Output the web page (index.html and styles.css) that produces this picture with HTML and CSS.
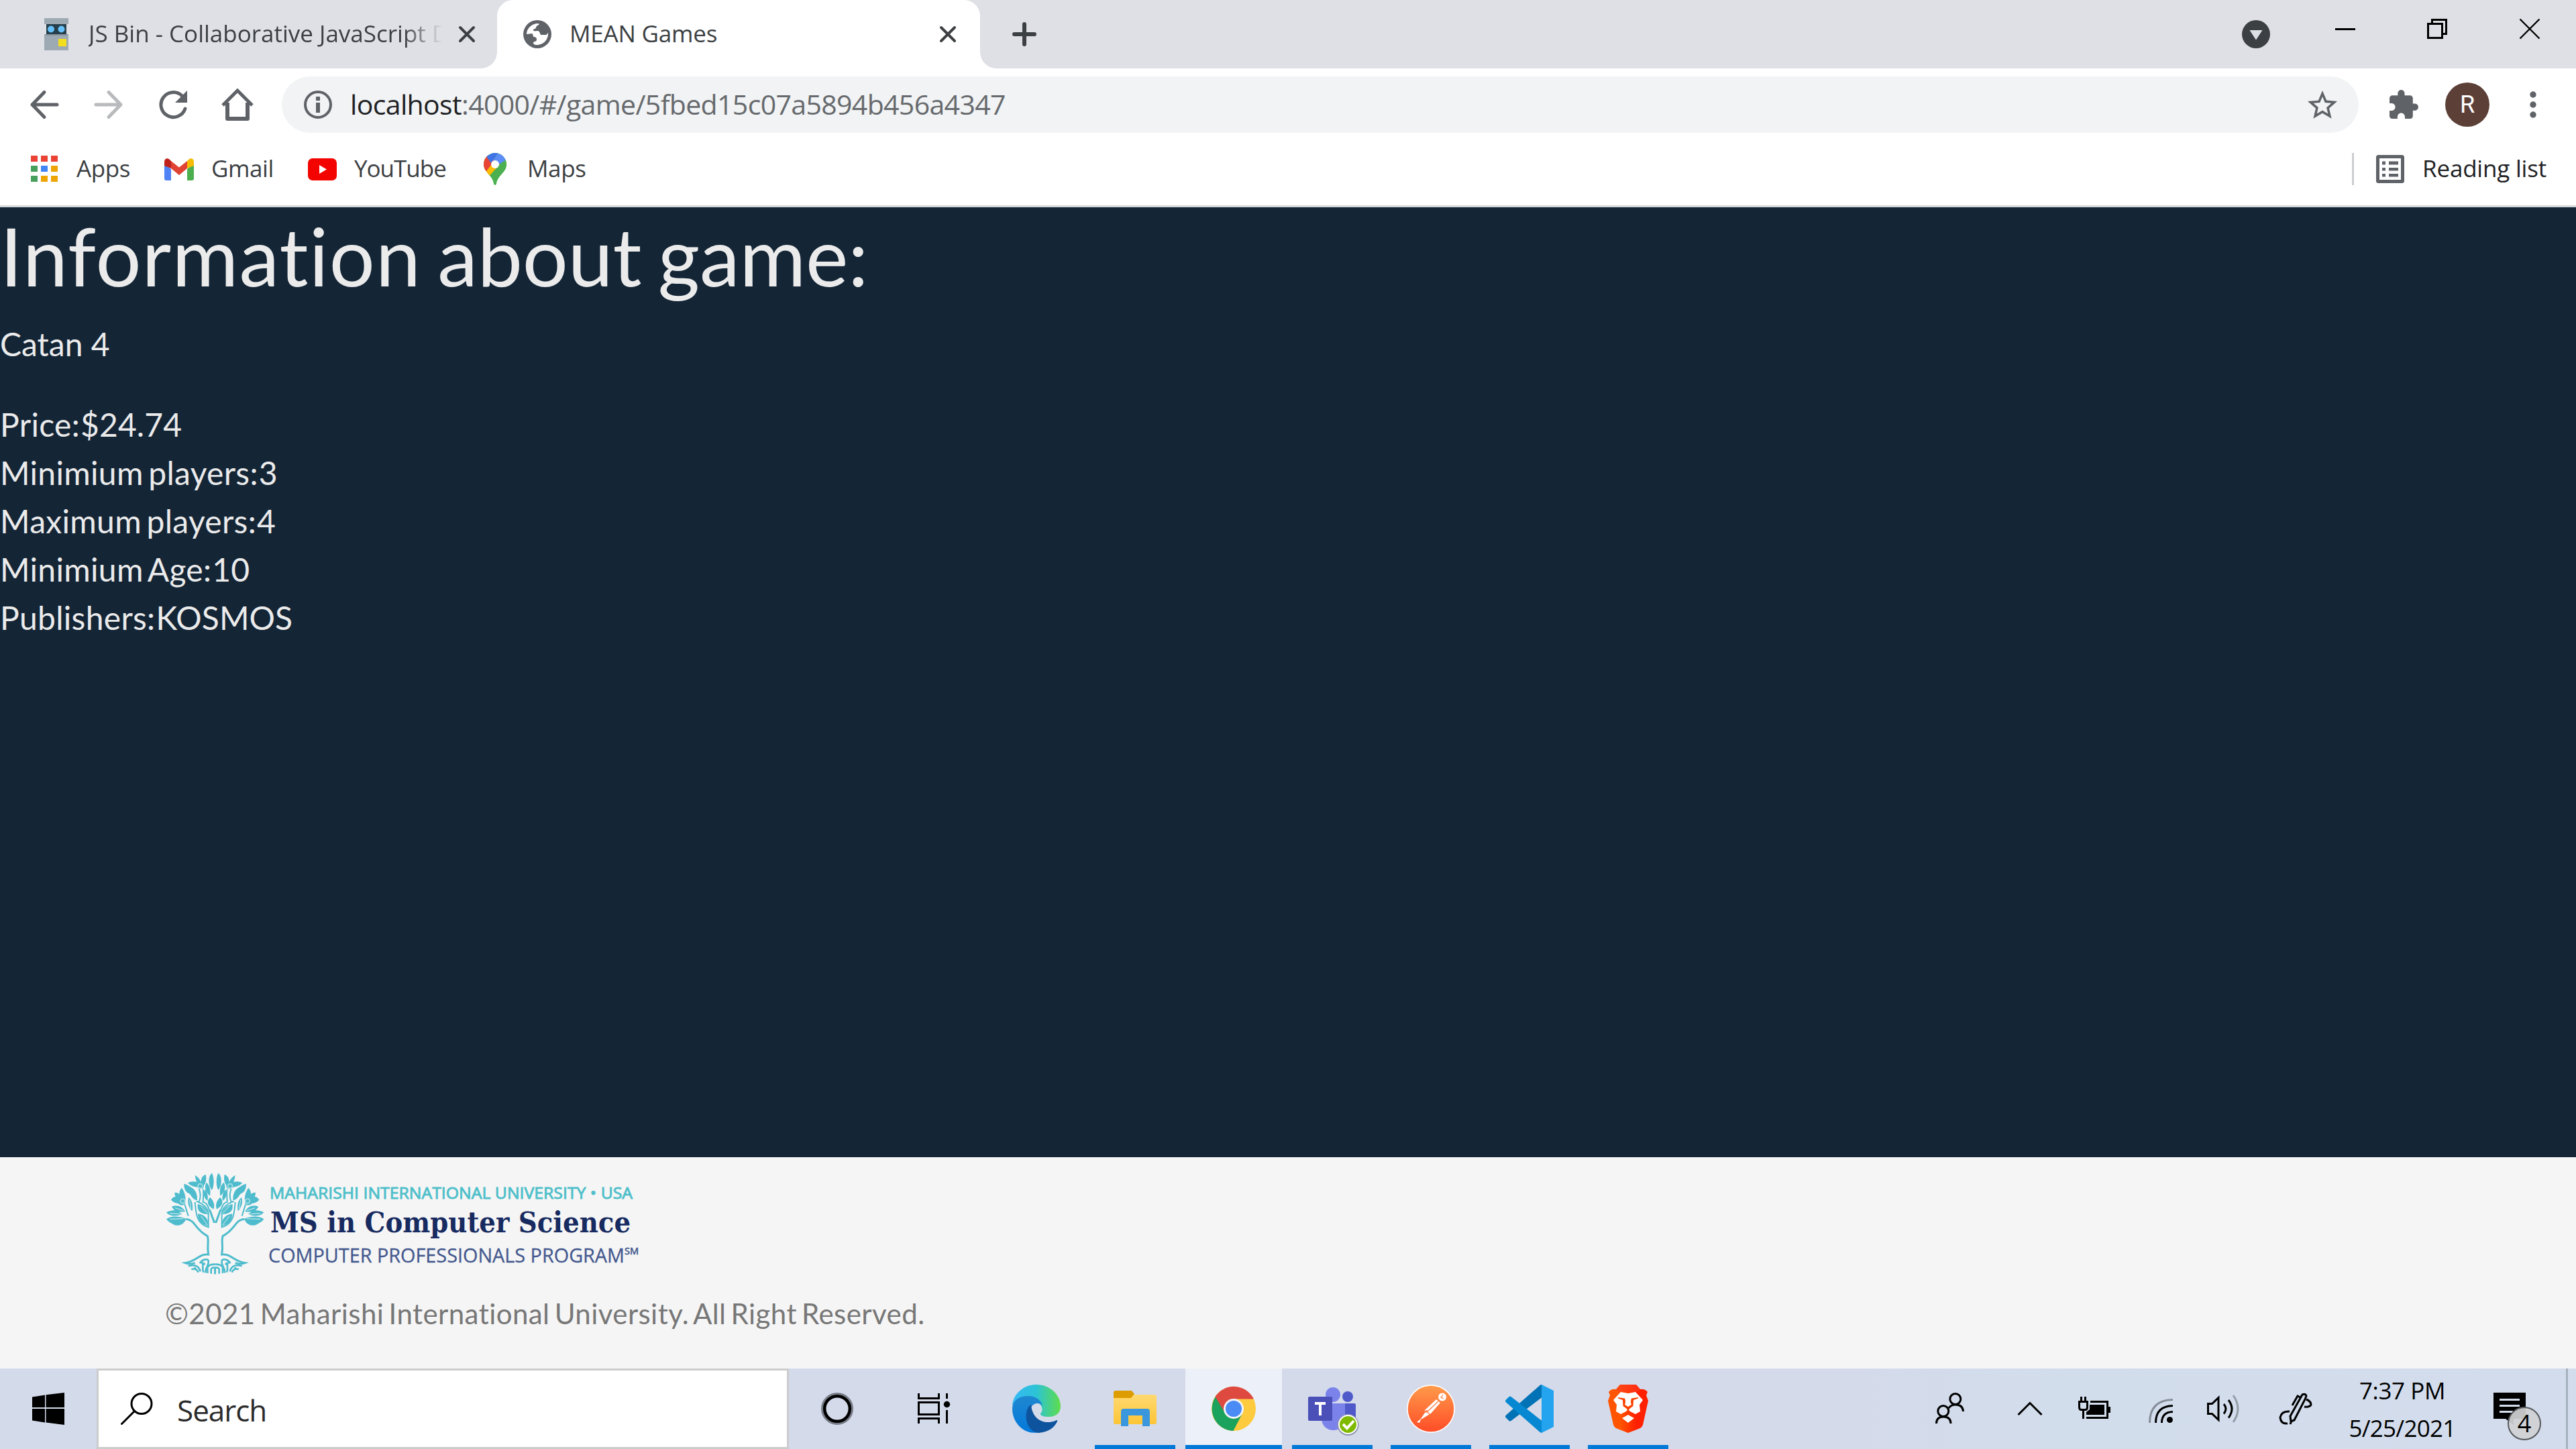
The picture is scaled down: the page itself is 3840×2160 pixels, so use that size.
FILE: index.html
```html
<!DOCTYPE html>
<html lang="en">
<head>
<meta charset="utf-8">
<title>MEAN Games</title>
<link rel="stylesheet" href="styles.css">
</head>
<body>
<div class="tabs">
  <div class="tab tab-idle">
    <svg class="ic" width="36" height="48" viewBox="66 27 36 48"><path fill="#9eaab3" d="M66 27h36v9h-36zM66 51h36v24h-36z"/><path fill="#263f4b" d="M69 36h30v16h-30z"/><path fill="#8997a0" d="M67 51h34v2h-34z"/><circle cx="76" cy="43.500" r="5" fill="#67c0f7"/><circle cx="91.500" cy="43.500" r="5" fill="#67c0f7"/><path fill="#f2de1d" d="M87 58h12v11h-12z"/></svg>
    <span class="t tab-title fade">JS Bin - Collaborative JavaScript D</span>
    <svg class="ic" width="26" height="26" viewBox="683 38 26 26"><path d="M686 41l20 20M706 41l-20 20" stroke="#3c4043" stroke-width="4" stroke-linecap="round"/></svg>
  </div>
  <div class="tab tab-active">
    <svg class="ic" width="42" height="42" viewBox="0 0 42 42"><circle cx="21" cy="21" r="21" fill="#5f6368"/><path fill="#fff" d="M5 21C5 12 13 5 22 5c2 0 2 1 1 2-2 1-4 2-4 4 0 3-4 1-4 4 0 2 3 1 6 1 5 0 3 6 6 6h7c2-1 3-3 3-4 1 10-6 19-17 19-3 0-5-1-5-3 0-3 5-1 5-5 0-2-1-4-4-4-2 0-1-5-3-5z"/></svg>
    <span class="t tab-title">MEAN Games</span>
    <svg class="ic" width="26" height="26" viewBox="683 38 26 26"><path d="M686 41l20 20M706 41l-20 20" stroke="#3c4043" stroke-width="4" stroke-linecap="round"/></svg>
  </div>
  <svg class="ic plus" width="36" height="36" viewBox="0 0 36 36"><path d="M18 3v30M3 18h30" stroke="#3c4043" stroke-width="6" stroke-linecap="round"/></svg>
  <div class="win">
    <svg class="ic drop" width="42" height="42" viewBox="0 0 42 42"><circle cx="21" cy="21" r="21" fill="#3c4043"/><path d="M11.500 15h19L21 29.500z" fill="#dfe0e5"/></svg>
    <svg class="ic" width="306" height="32" viewBox="3481 27 306 32"><g fill="none" stroke="#000" stroke-width="3"><path d="M3481 43.500h30M3619.500 35.500h21v21h-21zM3625.500 35v-5.500h21v21H3641"/><path stroke-width="2.400" d="M3756.500 28.500l29 29M3785.500 28.500l-29 29"/></g></svg>
  </div>
</div>
<div class="toolbar">
  <svg class="ic nav" width="336" height="50" viewBox="44 131 336 50"><g fill="none" stroke="#5f6368" stroke-width="5"><path stroke-linecap="round" stroke-linejoin="round" d="M66 137.500L48 156l18 18.500M48 156h37"/><path stroke="#b9babd" stroke-linecap="round" stroke-linejoin="round" d="M162 137.500L180 156l-18 18.500M180 156h-37"/><path stroke-linecap="round" d="M276 162a18.500 18.500 0 1 1-4.500-19"/><path fill="#5f6368" stroke="none" d="M279 135v18h-18z"/><path stroke-linejoin="round" stroke-width="6" d="M339 153v24h30v-24"/><path d="M332 157l22-22 22 22"/></g></svg>
  <div class="omni">
    <svg class="ic" width="42" height="42" viewBox="0 0 42 42"><circle cx="21" cy="21" r="19" fill="none" stroke="#5f6368" stroke-width="4"/><path fill="#5f6368" d="M18 9h6v6h-6zM18 18h6v15h-6z"/></svg>
    <span class="t url"><b>localhost</b>:4000/#/game/5fbed15c07a5894b456a4347</span>
    <svg class="ic star" width="44" height="43" viewBox="2 2 20 19.500"><path fill="#5f6368" d="M22 9.240l-7.190-.62L12 2 9.190 8.630 2 9.240l5.460 4.730L5.820 21 12 17.270 18.180 21l-1.630-7.030L22 9.240zM12 15.400l-3.760 2.270 1-4.280-3.320-2.880 4.380-.38L12 6.100l1.710 4.040 4.380.38-3.320 2.880 1 4.280L12 15.400z"/></svg>
  </div>
  <svg class="ic puz" width="44" height="44" viewBox="1.500 1 21.500 21.500"><path fill="#5f6368" d="M20.500 11H19V7c0-1.100-.9-2-2-2h-4V3.500a2.500 2.500 0 0 0-5 0V5H4c-1.100 0-1.990.9-1.990 2v3.800H3.500c1.490 0 2.700 1.210 2.700 2.700s-1.210 2.700-2.700 2.700H2V20c0 1.100.9 2 2 2h3.800v-1.500c0-1.490 1.210-2.700 2.700-2.700s2.700 1.210 2.700 2.700V22H17c1.100 0 2-.9 2-2v-4h1.500a2.500 2.500 0 0 0 0-5z"/></svg>
  <span class="avatar">R</span>
  <svg class="ic" width="10" height="40" viewBox="0 0 10 40"><g fill="#5f6368"><circle cx="5" cy="5" r="4.700"/><circle cx="5" cy="20" r="4.700"/><circle cx="5" cy="35" r="4.700"/></g></svg>
</div>
<div class="marks">
  <svg class="ic" width="40" height="40" viewBox="0 0 40 40"><path fill="#ea4335" d="M0 0h10v9H0zM15 0h10v9H15zM30 0h10v9H30z"/><path fill="#46a05b" d="M0 15h10v9H0zM0 30h10v9H0z"/><path fill="#4285f4" d="M15 15h10v9H15z"/><path fill="#eda503" d="M30 15h10v9H30zM15 30h10v9H15zM30 30h10v9H30z"/></svg>
  <span class="t m1">Apps</span>
  <svg class="ic" width="44" height="33" viewBox="0 0 44 33"><path fill="#4f82f5" d="M0 8l10 8v17H3q-3 0-3-3z"/><path fill="#4bae4f" d="M44 8l-10 8v17h7q3 0 3-3z"/><path fill="#e04333" d="M10 4l12 9.500L34 4v11L22 25 10 15z"/><path fill="#bf221c" d="M0 11V5c0-5 5-6 8-3l2 2v11z"/><path fill="#f5bb05" d="M44 11V5c0-5-5-6-8-3l-2 2v11z"/></svg>
  <span class="t m2">Gmail</span>
  <svg class="ic" width="43" height="33" viewBox="0 0 43 33"><rect width="43" height="33" rx="7" fill="#f30400"/><path fill="#fff" d="M17 10l11 6.500L17 23z"/></svg>
  <span class="t m3">YouTube</span>
  <svg class="ic" width="34" height="48" viewBox="0 0 34 48"><defs><clipPath id="pin"><path d="M17 0C7 0 0 8 0 17c0 12 14 17 15 29q2 4 4 0C20 34 34 29 34 17 34 8 27 0 17 0z"/></clipPath></defs><g clip-path="url(#pin)"><path fill="#4caf50" d="M0 0h34v48H0z"/><path fill="#fbbc04" d="M0 28L24 2v15L5 38z"/><path fill="#e94335" d="M0 0l17 10L2 30H0z"/><path fill="#3e74e8" d="M4 5L17-2h6L11 15z"/><path fill="#5c8df6" d="M22 0h12v10L20 19l-6-8z"/><path fill="#4caf50" d="M34 9L18 26l16 5z"/></g><circle cx="17" cy="17" r="6" fill="#fff"/></svg>
  <span class="t m4">Maps</span>
  <i class="bar"></i>
  <svg class="ic" width="42" height="42" viewBox="0 0 42 42"><rect x="2.500" y="2.500" width="37" height="37" rx="1" fill="none" stroke="#5f6368" stroke-width="5"/><path fill="#5f6368" d="M9 9.500h5v5H9zM19 9.500h14v5H19zM9 19h5v4.500H9zM19 19h14v4.500H19zM9 28h5v4.500H9zM19 28h14v4.500H19z"/></svg>
  <span class="t m5">Reading list</span>
</div>
<main>
  <h1><span>Information</span> about game:</h1>
  <p>Catan 4</p>
  <div class="row">Price:<span>$24.74</span></div>
  <div class="row">Minimium players:<span>3</span></div>
  <div class="row">Maximum players:<span>4</span></div>
  <div class="row">Minimium Age:<span>10</span></div>
  <div class="row">Publishers:<span>KOSMOS</span></div>
</main>
<footer>
  <svg class="ic" width="720" height="165" viewBox="240 1740 720 165">
    <g transform="translate(240 1740) scale(.33333)">
      <defs>
        <g id="half">
          <path d="M228 26c-20 14-16 60 0 76 11-18 10-60 0-76zM200 32c-16 6-22 20-20 34-8-16-18-26-28-30 2 14 4 22 8 30-14-4-28-2-40 4 12 12 20 16 34 18 8 2 14 4 18 6 14 6 20-2 20-14 10-10 12-30 8-48zM103 74c0 24 8 38 24 44 8 8 16 28 34 30 4-30-10-50-26-58-8-6-20-14-32-16zM203 68c-10 20-6 42 16 60 4-26 0-48-16-60zM93 92c-8 8-12 16-10 28-6-4-14-8-22-6 0 8 2 12 4 18-8 0-16 6-20 14 10 10 20 14 32 16 14 14 34 8 32-10 2-18-2-40-16-60zM124 134c-8 22 0 48 16 62 4-26 0-48-16-62zM219 134c-16 20-12 38 16 54 8-22-2-42-16-54zM48 176c12 24 36 26 60 22-12-24-36-32-60-22zM24 202c14 18 44 20 70 8-20-20-44-22-70-8zM24 232c20-16 54-14 88-2-8 30-44 38-62 22-10-4-20-10-26-20zM196 100c-10 20-2 40 12 50 4-20 0-36-12-50zM165 164c-6 30 10 46 46 46-4-26-22-40-46-46zM165 208c0 32 16 48 48 54-2-30-14-50-48-54z"/>
          <path fill="none" stroke="#4fbccd" stroke-width="6" d="M106 166l16 52M152 156c4 50 6 96 60 112v-60c0-26-26-46-54-56M170 96c8 22 8 40 0 58M188 98c4 20 0 40 0 58 20 0 26 30 48 90h8M219 190l20 54"/>
          <path fill="none" stroke="#4fbccd" stroke-width="9" d="M112 232c46 6 32 40 96 76 8 30-4 32 4 82-44-4-48 30-104 38 20 8 36 2 44 0"/>
          <path fill="none" stroke="#4fbccd" stroke-width="8" d="M122 442c24-8 46-4 54 24M136 456c20-4 28 4 30 14M174 430c10-20 34-22 38-12 4 24-12 22-14 54M180 420c16 16 0 30 10 50M208 474v-26c4-10 20-14 34-14M224 476v-20c4-8 8-8 18-8M242 452v26"/>
          <circle cx="175" cy="84" r="10" stroke="#a9e0e4" stroke-width="5"/><circle cx="97" cy="151" r="10" stroke="#a9e0e4" stroke-width="5"/><circle cx="192" cy="432" r="6"/><circle cx="152" cy="451" r="5"/>
          <path fill="none" stroke="#d9f0f2" stroke-width="3" d="M40 206l50 4M40 232l60-2M176 172l32 34M178 218l30 40M128 146l6 40M64 182l36 12"/>
        </g>
      </defs>
      <g fill="#4fbccd"><use href="#half"/><use href="#half" transform="matrix(-1 0 0 1 484 0)"/></g>
    </g>
    <g font-family="'Open Sans', sans-serif">
      <text x="402" y="1786.500" font-size="24" fill="#4fbfca" stroke="#4fbfca" stroke-width=".9" textLength="541" lengthAdjust="spacingAndGlyphs">MAHARISHI INTERNATIONAL UNIVERSITY • USA</text>
      <text x="403" y="1837" font-size="43.500" font-weight="bold" font-family="'DejaVu Serif Condensed','DejaVu Serif',serif" fill="#172b60" textLength="537" lengthAdjust="spacingAndGlyphs">MS in Computer Science</text>
      <text x="400" y="1881.500" font-size="28.500" fill="#44598f" stroke="#44598f" stroke-width=".3" textLength="531" lengthAdjust="spacingAndGlyphs">COMPUTER PROFESSIONALS PROGRAM</text>
      <text x="931" y="1870" font-size="14" fill="#44598f" stroke="#44598f" stroke-width=".6" textLength="21" lengthAdjust="spacingAndGlyphs">SM</text>
    </g>
  </svg>
  <div class="copy">©2021 Maharishi International University. All Right Reserved.</div>
</footer>
<div class="task">
  <div class="start"><svg class="ic" width="48" height="48" viewBox="0 0 48 48"><path d="M0 6.500l19-3V22H0zM20.500 3.200L48 0v22H20.500zM0 24h19v20.500L0 41.500zM20.500 24H48v24l-27.500-3.500z"/></svg></div>
  <div class="search">
    <svg class="ic" width="48" height="48" viewBox="0 0 48 48"><circle cx="31" cy="16.500" r="15" fill="none" stroke="#000" stroke-width="3"/><path d="M20.500 27.500L1.500 46.500" stroke="#000" stroke-width="3" stroke-linecap="round"/></svg>
    <span class="t q">Search</span>
  </div>
  <div class="app"><svg class="ic" width="144" height="120" viewBox="1176 2040 144 120"><circle cx="1248" cy="2100" r="22" fill="none" stroke="#777c87" stroke-width="4"/><circle cx="1248" cy="2100" r="18.800" fill="none" stroke="#000" stroke-width="4.500"/></svg></div>
  <div class="app"><svg class="ic" width="144" height="120" viewBox="1320 2040 144 120"><path fill="none" stroke="#000" stroke-width="3" d="M1369.500 2077v7.500h30v-7.500M1369.500 2090.500h30v18h-30zM1369.500 2122v-7.500h30v7.500M1411.500 2077v8M1411.500 2102v20"/><circle cx="1411.500" cy="2093.500" r="4.700"/></svg></div>
  <div class="app"><svg class="ic" width="168" height="120" viewBox="1464 2040 168 120"><defs><linearGradient id="e1" x1="0" x2="1"><stop offset="0" stop-color="#35b9f6"/><stop offset=".5" stop-color="#2cc3d5"/><stop offset="1" stop-color="#5fdd4a"/></linearGradient><linearGradient id="e2" x1="0" y1="0" x2="0" y2="1"><stop offset="0" stop-color="#1f87d0"/><stop offset="1" stop-color="#0379da"/></linearGradient></defs><path fill="url(#e1)" d="M1509 2094c2-17 17-30 36-30 21 0 36 16 36 32 0 11-8 16-17 16-8 0-14-2-13-5 3-3 3-6 2-9-4-12-18-17-44-4z"/><path fill="url(#e2)" d="M1509 2100c0-12 10-19 23-19 14 0 21 8 22 15-4-6-14-6-18 4-3 12-2 22 12 35-20 5-39-13-39-35z"/><path fill="#0e539d" d="M1537 2094c-12 6-10 40 11 42 16-1 24-9 28-17 1-2-1-3-3-1-16 6-34-1-36-24z"/></svg></div>
  <div class="app run"><svg class="ic" width="120" height="114" viewBox="1632 2040 120 114"><defs><linearGradient id="f" x1="0" y1="0" x2="0" y2="1"><stop offset="0" stop-color="#ffd970"/><stop offset="1" stop-color="#fdc537"/></linearGradient></defs><path fill="url(#f)" d="M1660 2083l26-4h35q3 0 3 3v38q0 3-3 3h-58q-3 0-3-3z"/><path fill="#dd9c00" d="M1660 2084v-8q0-3 3-3h24l4 5-5 6z"/><path fill="#3b97dd" d="M1671 2126v-22q0-4 4-4h35q4 0 4 4v22h-11v-16h-21v16z"/></svg></div>
  <div class="app run on"><svg class="ic" width="144" height="114" viewBox="1767 2040 144 114"><circle cx="1839" cy="2100" r="33" fill="#fecb3e"/><path fill="#1ba25c" d="M1839 2100l-26-19.500a33 33 0 0 0 25.500 52.500l13-25z"/><path fill="#de4a40" d="M1811.500 2082a33 33 0 0 1 57.500 3.500h-30l-14 19z"/><circle cx="1839" cy="2100" r="15" fill="#f1f3f8"/><circle cx="1839" cy="2100" r="12" fill="#4a8bf5"/></svg></div>
  <div class="app run"><svg class="ic" width="120" height="114" viewBox="1926 2040 120 114"><circle cx="1987" cy="2079" r="11" fill="#7b83eb"/><circle cx="2009" cy="2082" r="8" fill="#5059c9"/><path fill="#5059c9" d="M2004 2092h15q2 0 2 2v18q0 14-17 14z"/><path fill="#7b83eb" d="M1970 2092h35v22c0 24-35 24-35 0z"/><rect x="1950" y="2082" width="36" height="36" rx="2" fill="#4a50b8"/><path fill="#fff" d="M1960 2090h16v4h-6v16h-4v-16h-6z"/><circle cx="2009.500" cy="2124" r="16" fill="#8b90a8"/><circle cx="2009.500" cy="2123.500" r="14.500" fill="#fff"/><circle cx="2009.500" cy="2123.500" r="12.500" fill="#7fba00"/><path fill="none" stroke="#fff" stroke-width="4" d="M2002 2123l6 6 10-11"/></svg></div>
  <div class="app run"><svg class="ic" width="120" height="114" viewBox="2073 2040 120 114"><defs><linearGradient id="p" x1="0" y1="0" x2="0" y2="1"><stop offset="0" stop-color="#ff9a4a"/><stop offset="1" stop-color="#ff4d27"/></linearGradient></defs><circle cx="2133" cy="2100" r="36" fill="#fff"/><circle cx="2133" cy="2100" r="34.300" fill="url(#p)"/><circle cx="2150" cy="2082.500" r="6" fill="#fff"/><path fill="#fff" d="M2141 2086l6 5-14 16-15 9-2 5-4-1 6-5 6-9 5-4-6 1z"/><path stroke="#fd7a3d" fill="none" stroke-width="1.200" d="M2144 2089l-18 17M2126 2103l6 6M2151 2079l-3 4 4 2"/></svg></div>
  <div class="app run"><svg class="ic" width="120" height="114" viewBox="2220 2040 120 114"><path fill="#0072b5" d="M2244.500 2110q-1 2 0 3l5 5q2 1 3 0l46-35v-19q-2 0-3 1z"/><path fill="#0588d1" d="M2244.500 2087l5-5q2-1 3 0l46 36v18q-2 0-4-2l-50-44q-1-2 0-3z"/><path fill="#24a3ee" d="M2298 2064l18 9v54l-18 9z"/></svg></div>
  <div class="app run"><svg class="ic" width="120" height="114" viewBox="2367 2040 120 114"><defs><linearGradient id="b" x1="0" x2="1"><stop offset=".3" stop-color="#ff5500"/><stop offset=".7" stop-color="#ff2000"/></linearGradient></defs><path fill="url(#b)" d="M2415 2064h24l6 7q7-1 11 4l-2 5 3 8-8 36q-1 3-4 5l-18 7-18-7q-3-2-4-5l-8-36 3-8-2-5q4-5 11-4z"/><path fill="#ff3a20" d="M2415 2064h24l6 7-4 4h-28l-4-4z" opacity=".6"/><path fill="#fff" d="M2416 2075l11 2 11-2 11 12-5 7 1 10-7 4-6-3-5-3-5 3-6 3-7-4 1-10-5-7zM2427 2109l9 5-9 7-9-7z"/><path fill="#fd4000" d="M2412 2083l10 1.500q2 5 0 9.500l5 3 5-3q-2-4.500 0-9.500l10-1.500v1.500l-7 2.500-.5 9-6 4.500v2l-1.500 1-1.500-1v-2l-6-4.500-.5-9-7-2.500z"/></svg></div>
  <div class="tray">
    <svg class="ic" width="580" height="120" viewBox="2880 2040 580 120"><g fill="none" stroke="#000" stroke-width="3"><circle cx="2914.800" cy="2085.500" r="8"/><path d="M2905 2099q3-5 10-5 11 0 11.500 10"/><circle cx="2896.800" cy="2103.500" r="8"/><path d="M2886.500 2122q0-10 10.500-10 11 0 11 10M3008.500 2109l17.500-17.500 17.500 17.500M3116 2089.500h25.500v24H3110"/><path fill="#000" stroke="none" d="M3115 2094h22v15h-27v-4l5-4zM3142 2097h4v9h-4z"/><path d="M3099.500 2089.500h12v8q0 4-3 4h-6q-3 0-3-4zM3102.500 2089v-7M3108.500 2089v-7M3105.500 2102v13"/><path stroke="#858d98" d="M3204.500 2121q0-34 34.500-34.500"/><path d="M3213.500 2121q0-25 25.500-25.500M3222.500 2121q0-16 16.500-16.500"/><circle cx="3234.500" cy="2116.500" r="4.500" fill="#000" stroke="none"/><path d="M3291.500 2092.500h6l9.500-9v33l-9.500-9h-6zM3315 2093q6 7 0 14.500M3322 2087q10 13 0 26.500"/><path stroke="#959da8" d="M3329 2080q14 20 0 40"/><path d="M3415 2119l-1-8 18-32q5-2 6 2l-2 5-16 31zM3417 2095l8-14 4 2M3413 2104q-12-1-14 9 1 10 11 9M3438 2086q7 3 7 8-2 4-10 3M3414 2123l2-5"/></g></svg>
    <div class="clock"><span class="t time">7:37 PM</span><span class="t date">5/25/2021</span></div>
    <div class="note">
      <svg class="ic" width="48" height="48" viewBox="0 0 48 48"><path d="M0 0h48v39H30v9L18 39H0z"/><path stroke="#d3ddec" stroke-width="3" d="M9 10.500h30M9 19.500h30M9 28.500h20"/></svg>
      <span class="badge">4</span>
    </div>
    <i class="peek"></i>
  </div>
</div>
</body>
</html>
```
FILE: styles.css
```css
* { box-sizing: border-box; }
body { margin: 0; width: 3840px; height: 2160px; overflow: hidden; display: flex; flex-direction: column; background: #fff; font-family: "Open Sans", "Noto Sans", sans-serif; }
.ic { display: block; flex: none; }
.t { white-space: pre; flex: none; font-size: 35px; color: #3c4043; }

.tabs { height: 102px; flex: none; display: flex; align-items: center; background: #dfe0e5; }
.tab { height: 102px; display: flex; align-items: center; flex: none; }
.tab-idle { width: 741px; padding-left: 66px; background: #dfe0e5; }
.tab-active { width: 720px; padding-left: 39px; border-radius: 24px 24px 0 0; background: #fff; position: relative; }
.tab-active::before, .tab-active::after { content: ""; position: absolute; bottom: 0; width: 24px; height: 24px; }
.tab-active::before { left: -24px; background: radial-gradient(circle at 0 0, transparent 23.5px, #fff 24px); }
.tab-active::after { right: -24px; background: radial-gradient(circle at 100% 0, transparent 23.5px, #fff 24px); }
.tab-title { padding-bottom: 4px; letter-spacing: -0.2px; }
.tab-idle .tab-title { width: 527px; margin: 0 24px 0 30px; letter-spacing: 0; }
.tab-active .tab-title { width: 524px; margin: 0 27px 0 27px; }
.fade { -webkit-mask-image: linear-gradient(90deg, #000 470px, transparent 527px); mask-image: linear-gradient(90deg, #000 470px, transparent 527px); }
.plus { margin-left: 48px; }
.win { margin-left: auto; display: flex; align-items: center; padding-right: 53px; }
.drop { margin-right: 97px; }
.win .ic:last-child { margin-bottom: 16px; }

.toolbar { height: 96px; padding-top: 12px; flex: none; display: flex; align-items: center; }
.nav { margin-left: 44px; }
.omni { width: 3096px; height: 84px; margin-left: 40px; border-radius: 42px; background: #f1f3f4; display: flex; align-items: center; padding-left: 33px; }
.url { font-size: 41px; margin-left: 27px; padding-bottom: 2px; letter-spacing: -0.64px; color: #66696d; }
.url b { font-weight: normal; color: #202124; }
.star { margin: 0 32px 0 auto; }
.puz { margin: 0 40px 0 45px; }
.avatar { width: 66px; height: 66px; margin-right: 60px; border-radius: 50%; background: #5c4037; color: #fff; font: 36px/67px Roboto, sans-serif; text-align: center; }

.marks { height: 111px; flex: none; display: flex; align-items: center; padding-left: 46px; border-bottom: 3px solid #d6d8db; }
.marks .t { padding-bottom: 3px; letter-spacing: -0.4px; }
.m1 { margin-left: 28px; width: 131px; }
.m2 { margin-left: 26px; width: 144px; }
.marks .m3 { margin-left: 26px; width: 193px; letter-spacing: -1px; }
.m4 { margin-left: 31px; }
.bar { width: 3px; height: 48px; margin: 0 33px 0 auto; background: #cccdd0; }
.marks .m5 { margin: 0 44px 0 27px; color: #202124; letter-spacing: -0.2px; }

main { height: 1416px; flex: none; background: #142536; color: #ebebeb; font: 48px/72px Lato, sans-serif; font-variant-ligatures: none; }
h1 { margin: 0 0 24px; font-size: 120px; line-height: 144px; font-weight: 400; word-spacing: -6.5px; letter-spacing: -0.1px; }
h1 span { letter-spacing: 1.2px; }
p { margin: 0 0 48px; }
.row { letter-spacing: 0.3px; word-spacing: -5px; }
.row span { margin-left: 1px; letter-spacing: 0.1px; }

footer { height: 315px; flex: none; padding: 15px 0 0 240px; background: #f5f5f5; }
.copy { margin: 23px 0 0 6px; font: 42px/60px Lato, sans-serif; font-variant-ligatures: none; word-spacing: -4px; letter-spacing: 0.44px; color: #777; }

.task { height: 120px; flex: none; display: flex; background: linear-gradient(90deg, #d3daea 0, #d4daea 72%, #d2ddec 80%, #d3dcec 100%); }
.start { width: 144px; padding: 36px 48px; flex: none; }
.search { width: 1032px; border: 3px solid #ccc; background: #fff; display: flex; align-items: center; flex: none; padding-left: 33px; }
.q { font-size: 44px; margin-left: 36px; padding-top: 4px; letter-spacing: -1px; color: #2b2b2b; }
.app { flex: none; height: 120px; }
.run { border-bottom: 6px solid #0078d7; margin-right: 27px; }
.run.on { background: #ecf0f8; margin: 0 15px 0 -12px; }
.tray { margin-left: auto; display: flex; align-items: center; }
.clock { width: 257px; padding: 1px 15px 0 0; display: flex; flex-direction: column; align-items: center; }
.clock .t { line-height: 56px; color: #000; }
.time { letter-spacing: -0.4px; }
.date { letter-spacing: -0.75px; }
.note { position: relative; width: 108px; }
.badge { position: absolute; left: 21px; top: 21px; width: 50px; height: 50px; border: 2px solid #55585c; border-radius: 50%; background: rgba(208, 209, 211, .93); font-size: 36px; line-height: 45px; text-align: center; color: #000; }
.peek { width: 3px; height: 120px; background: #a6b1bf; margin-right: 12px; }
```
